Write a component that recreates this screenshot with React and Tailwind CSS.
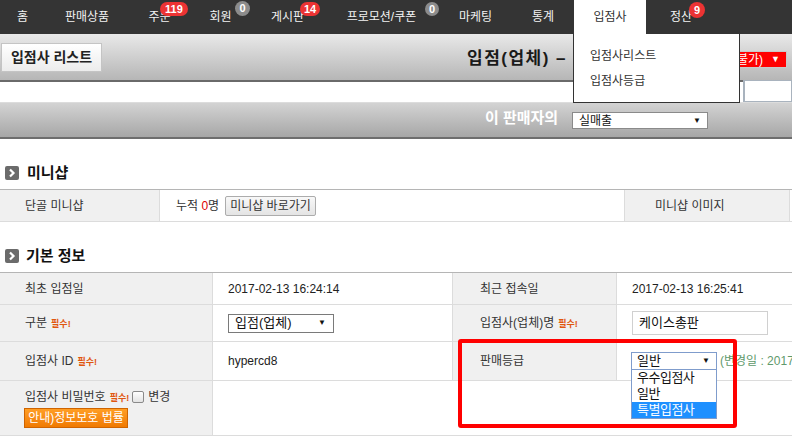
import React from "react";

const navItems = [
  { label: "홈", cls: "w-[45px]" },
  { label: "판매상품", cls: "w-[84px]" },
  { label: "주문", cls: "w-[61px]", badge: "119", bcls: "left-[31px] top-[2px] h-[14px] px-[5px] bg-[#ec3333]" },
  { label: "회원", cls: "w-[61px]", badge: "0", bcls: "left-[45px] top-[1px] h-[15px] w-[15px] bg-[#8c8c8c] justify-center" },
  { label: "게시판", cls: "w-[73px]", badge: "14", bcls: "left-[49px] top-[2px] h-[14px] px-[4px] bg-[#ec3333]" },
  { label: "프로모션/쿠폰", cls: "w-[115px]", badge: "0", bcls: "left-[101px] top-[2px] h-[14px] w-[14px] bg-[#8c8c8c] justify-center" },
  { label: "마케팅", cls: "w-[73px]" },
  { label: "통계", cls: "w-[62px]" },
  { label: "입점사", cls: "w-[72px]", active: true },
  { label: "정산", cls: "w-[70px]", badge: "9", bcls: "left-[43px] top-[2px] h-[16px] w-[16px] bg-[#ec3333] justify-center" },
];

function SectionIcon() {
  return (
    <svg width="14" height="14" viewBox="0 0 14 14" className="shrink-0">
      <rect x="0" y="0" width="14" height="14" rx="2" fill="#6b6b6b" />
      <path d="M5 3.5 L8.5 7 L5 10.5" stroke="#fff" strokeWidth="2.2" fill="none" />
    </svg>
  );
}

function Req() {
  return <span className="ml-[4px] text-[9px] font-bold text-[#e0560f] relative top-[2px]">필수!</span>;
}

export default function App() {
  return (
    <div className="relative w-[792px] h-[439px] overflow-hidden bg-white text-[12px] text-[#333] font-['Liberation_Sans','Noto_Sans_CJK_KR',sans-serif]">
      {/* Top nav */}
      <nav className="flex h-[34px] bg-[#343434] text-[#f2f2f2]">
        {navItems.map((it) => (
          <div
            key={it.label}
            className={`${it.cls} relative shrink-0 flex items-center justify-center ${it.active ? "bg-white text-[#333]" : ""}`}
          >
            <span>{it.label}</span>
            {it.badge && (
              <span className={`absolute ${it.bcls} flex items-center rounded-full text-[11px] font-bold leading-none text-white`}>
                {it.badge}
              </span>
            )}
          </div>
        ))}
      </nav>

      {/* Header band */}
      <div className="flex items-center h-[48px] border-b-2 border-[#6a6a6a] bg-gradient-to-b from-[#e9e9e9] to-[#b6b6b6]">
        <div className="ml-px h-[29px] w-[101px] flex items-center justify-center border border-[#c4c4c4] bg-gradient-to-b from-white to-[#ececec] text-[14px] font-bold text-[#222]">
          입점사 리스트
        </div>
        <div className="ml-[365px] pt-[4px] text-[17px] font-bold tracking-[1.5px] text-[#1a1a1a] whitespace-nowrap">
          입점(업체) –
        </div>
        <div className="ml-auto mr-[5px] mt-[5px] h-[17px] flex items-center gap-[8px] bg-[#ff0000] border border-[#c9c9c9] pl-[4px] pr-[6px] text-white">
          <span>불가)</span>
          <span className="text-[9px]">▼</span>
        </div>
      </div>

      {/* White band */}
      <div className="h-[20px] flex justify-end">
        <div className="mt-[-2px] w-[49px] h-[22px] border border-l-2 border-[#a9b3be] bg-white"></div>
      </div>

      {/* Band 2 */}
      <div className="flex items-start h-[37px] border-t border-[#dcdcdc] border-b-2 border-b-[#6e6e6e] bg-gradient-to-b from-[#d3d3d3] to-[#a7a7a7] pl-[485px]">
        <span className="mt-[4px] w-[87px] shrink-0 text-[15px] font-bold text-white whitespace-nowrap">이 판매자의</span>
        <div className="mt-[9px] w-[136px] h-[17px] flex items-center justify-between bg-white border border-[#8a8a8a] pl-[6px] pr-[6px] text-[12px] text-[#111]">
          <span>실매출</span>
          <span className="text-[8px]">▼</span>
        </div>
      </div>

      {/* Section: 미니샵 */}
      <div className="h-[50px] pt-[18px] flex items-center gap-[8px] pl-[5px]">
        <SectionIcon />
        <span className="text-[15px] font-bold text-[#111]">미니샵</span>
      </div>
      <div className="flex h-[33px] border-t border-b border-t-[#b5b5b5] border-b-[#dcdcdc]">
        <div className="w-[160px] shrink-0 bg-[#f0f0f0] border-r border-[#dcdcdc] pl-[25px] flex items-center">단골 미니샵</div>
        <div className="w-[465px] shrink-0 border-r border-[#dcdcdc] pl-[16px] flex items-center">
          <span>누적 <span className="text-[#e00000]">0</span>명</span>
          <span className="ml-[6px] h-[20px] px-[4px] flex items-center rounded-[2px] border border-[#acacac] bg-gradient-to-b from-[#f8f8f8] to-[#e4e4e4] text-[#333]">
            미니샵 바로가기
          </span>
        </div>
        <div className="w-[165px] shrink-0 bg-[#f0f0f0] border-r border-[#dcdcdc] pl-[30px] flex items-center">미니샵 이미지</div>
        <div className="flex-1"></div>
      </div>

      {/* Section: 기본 정보 */}
      <div className="h-[50px] pt-[18px] flex items-center gap-[7px] pl-[5px]">
        <SectionIcon />
        <span className="text-[15px] font-bold text-[#111]">기본 정보</span>
      </div>
      <div className="border-t border-[#b5b5b5]">
        <div className="flex h-[32px] border-b border-[#dcdcdc]">
          <div className="w-[213px] shrink-0 bg-[#f0f0f0] border-r border-[#dcdcdc] pl-[25px] flex items-center">최초 입점일</div>
          <div className="w-[240px] shrink-0 border-r border-[#dcdcdc] pl-[15px] flex items-center text-[#222]">2017-02-13 16:24:14</div>
          <div className="w-[164px] shrink-0 bg-[#f0f0f0] border-r border-[#dcdcdc] pl-[27px] flex items-center">최근 접속일</div>
          <div className="flex-1 pl-[15px] flex items-center text-[#222]">2017-02-13 16:25:41</div>
        </div>
        <div className="flex h-[37px] border-b border-[#dcdcdc]">
          <div className="w-[213px] shrink-0 bg-[#f0f0f0] border-r border-[#dcdcdc] pl-[25px] flex items-center">구분<Req /></div>
          <div className="w-[240px] shrink-0 border-r border-[#dcdcdc] pl-[15px] flex items-center">
            <div className="w-[106px] h-[19px] flex items-center justify-between border border-[#7a7a7a] bg-white pl-[6px] pr-[7px] text-[13px] text-[#111]">
              <span>입점(업체)</span>
              <span className="text-[8px]">▼</span>
            </div>
          </div>
          <div className="w-[164px] shrink-0 bg-[#f0f0f0] border-r border-[#dcdcdc] pl-[27px] flex items-center whitespace-nowrap">입점사(업체)명<Req /></div>
          <div className="flex-1 pl-[15px] flex items-center">
            <div className="w-[136px] h-[24px] flex items-center border border-[#d0d0d0] pl-[6px] text-[13px] text-[#111]">케이스총판</div>
          </div>
        </div>
        <div className="flex h-[39px] border-b border-[#dcdcdc]">
          <div className="w-[213px] shrink-0 bg-[#f0f0f0] border-r border-[#dcdcdc] pl-[25px] flex items-center">입점사 ID<Req /></div>
          <div className="w-[240px] shrink-0 border-r border-[#dcdcdc] pl-[15px] flex items-center text-[#222]">hypercd8</div>
          <div className="w-[164px] shrink-0 bg-[#f0f0f0] border-r border-[#dcdcdc] pl-[27px] flex items-center">판매등급</div>
          <div className="flex-1 min-w-0 pl-[14px] flex items-center whitespace-nowrap overflow-hidden">
            <div className="relative w-[86px] h-[18px] shrink-0 flex items-center justify-between border border-[#7f9ccc] bg-white pl-[5px] pr-[6px] text-[13px] text-[#111]">
              <span>일반</span>
              <span className="text-[8px]">▼</span>
            </div>
            <span className="ml-[3px] text-[#5f9a6c]">(변경일 : 2017</span>
          </div>
        </div>
        <div className="flex h-[55px] border-b border-[#dcdcdc]">
          <div className="w-[213px] shrink-0 bg-[#f0f0f0] border-r border-[#dcdcdc] pl-[24px] pt-[8px] flex flex-col items-start">
            <div className="flex items-center h-[15px] whitespace-nowrap pl-px">
              <span>입점사 비밀번호</span>
              <Req />
              <span className="ml-[3px] w-[12px] h-[12px] rounded-[2px] border border-[#8a8a8a] bg-gradient-to-b from-white to-[#e3e3e3]"></span>
              <span className="ml-[4px]">변경</span>
            </div>
            <div className="mt-[4px] h-[20px] w-[104px] flex items-center justify-center border border-[#cf6400] bg-gradient-to-b from-[#ff9e24] to-[#f07a00] text-white">
              안내)정보보호 법률
            </div>
          </div>
          <div className="flex-1"></div>
        </div>
      </div>

      {/* Open select options overlay */}
      <div className="absolute left-[631px] top-[369px] w-[86px] border border-[#7f9ccc] bg-white text-[13px] tracking-[-0.5px] leading-[16px] text-[#111]">
        <div className="h-[16px] pl-[5px]">우수입점사</div>
        <div className="h-[16px] pl-[5px]">일반</div>
        <div className="h-[16px] pl-[5px] bg-[#1e90ff] text-white">특별입점사</div>
      </div>

      {/* Dropdown menu overlay from nav */}
      <div className="absolute left-[573px] top-[34px] w-[167px] h-[69px] bg-white border border-t-0 border-[#333] pt-[10px] text-[12px] text-[#333]">
        <div className="h-[25px] leading-[25px] pl-[16px]">입점사리스트</div>
        <div className="h-[25px] leading-[25px] pl-[16px]">입점사등급</div>
      </div>

      {/* Red annotation box */}
      <div className="absolute left-[458px] top-[339px] w-[279px] h-[89px] border-[4px] border-[#ff0000] rounded-[3px]"></div>
    </div>
  );
}
